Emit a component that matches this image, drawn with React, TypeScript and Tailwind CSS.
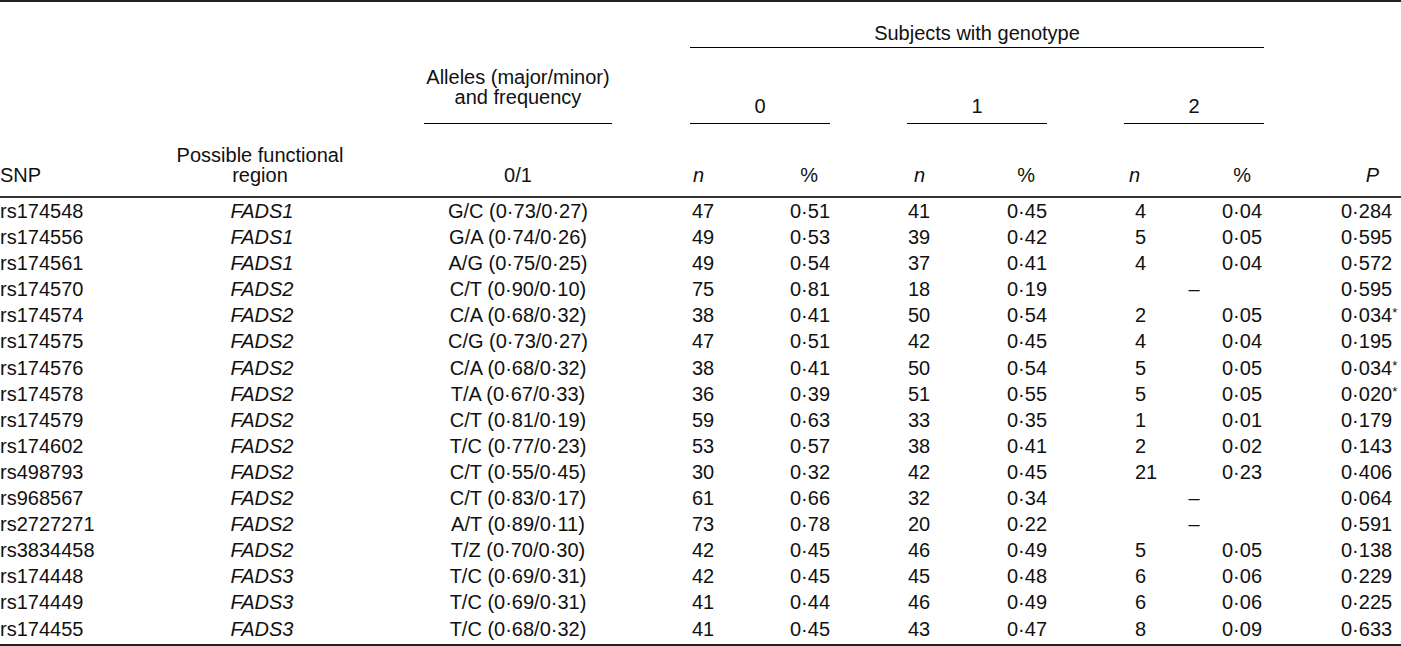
const COLS =
  "grid grid-cols-[170px_180px_74px_188px_78px_70px_70px_77px_70px_70px_77px_70px_70px_137px]";

type Row = {
  snp: string;
  region: string;
  alleles: string;
  n0: string;
  p0: string;
  n1: string;
  p1: string;
  n2?: string;
  p2?: string;
  p: string;
  sig?: boolean;
};

const ROWS: Row[] = [
  { snp: "rs174548", region: "FADS1", alleles: "G/C (0·73/0·27)", n0: "47", p0: "0·51", n1: "41", p1: "0·45", n2: "4", p2: "0·04", p: "0·284" },
  { snp: "rs174556", region: "FADS1", alleles: "G/A (0·74/0·26)", n0: "49", p0: "0·53", n1: "39", p1: "0·42", n2: "5", p2: "0·05", p: "0·595" },
  { snp: "rs174561", region: "FADS1", alleles: "A/G (0·75/0·25)", n0: "49", p0: "0·54", n1: "37", p1: "0·41", n2: "4", p2: "0·04", p: "0·572" },
  { snp: "rs174570", region: "FADS2", alleles: "C/T (0·90/0·10)", n0: "75", p0: "0·81", n1: "18", p1: "0·19", p: "0·595" },
  { snp: "rs174574", region: "FADS2", alleles: "C/A (0·68/0·32)", n0: "38", p0: "0·41", n1: "50", p1: "0·54", n2: "2", p2: "0·05", p: "0·034", sig: true },
  { snp: "rs174575", region: "FADS2", alleles: "C/G (0·73/0·27)", n0: "47", p0: "0·51", n1: "42", p1: "0·45", n2: "4", p2: "0·04", p: "0·195" },
  { snp: "rs174576", region: "FADS2", alleles: "C/A (0·68/0·32)", n0: "38", p0: "0·41", n1: "50", p1: "0·54", n2: "5", p2: "0·05", p: "0·034", sig: true },
  { snp: "rs174578", region: "FADS2", alleles: "T/A (0·67/0·33)", n0: "36", p0: "0·39", n1: "51", p1: "0·55", n2: "5", p2: "0·05", p: "0·020", sig: true },
  { snp: "rs174579", region: "FADS2", alleles: "C/T (0·81/0·19)", n0: "59", p0: "0·63", n1: "33", p1: "0·35", n2: "1", p2: "0·01", p: "0·179" },
  { snp: "rs174602", region: "FADS2", alleles: "T/C (0·77/0·23)", n0: "53", p0: "0·57", n1: "38", p1: "0·41", n2: "2", p2: "0·02", p: "0·143" },
  { snp: "rs498793", region: "FADS2", alleles: "C/T (0·55/0·45)", n0: "30", p0: "0·32", n1: "42", p1: "0·45", n2: "21", p2: "0·23", p: "0·406" },
  { snp: "rs968567", region: "FADS2", alleles: "C/T (0·83/0·17)", n0: "61", p0: "0·66", n1: "32", p1: "0·34", p: "0·064" },
  { snp: "rs2727271", region: "FADS2", alleles: "A/T (0·89/0·11)", n0: "73", p0: "0·78", n1: "20", p1: "0·22", p: "0·591" },
  { snp: "rs3834458", region: "FADS2", alleles: "T/Z (0·70/0·30)", n0: "42", p0: "0·45", n1: "46", p1: "0·49", n2: "5", p2: "0·05", p: "0·138" },
  { snp: "rs174448", region: "FADS3", alleles: "T/C (0·69/0·31)", n0: "42", p0: "0·45", n1: "45", p1: "0·48", n2: "6", p2: "0·06", p: "0·229" },
  { snp: "rs174449", region: "FADS3", alleles: "T/C (0·69/0·31)", n0: "41", p0: "0·44", n1: "46", p1: "0·49", n2: "6", p2: "0·06", p: "0·225" },
  { snp: "rs174455", region: "FADS3", alleles: "T/C (0·68/0·32)", n0: "41", p0: "0·45", n1: "43", p1: "0·47", n2: "8", p2: "0·09", p: "0·633" },
];

export default function App() {
  return (
    <div className="w-[1401px] bg-white font-['Liberation_Sans',Arial,sans-serif] text-[20px] text-[#111]">
      <div className="border-t-2 border-[#222]" />

      {/* header */}
      <div className={`${COLS} h-[46px] items-end leading-[20px]`}>
        <div className="col-start-6 col-span-8 border-b border-black pb-[4px] text-center">
          Subjects with genotype
        </div>
      </div>
      <div className={`${COLS} h-[76px] items-end leading-[20px]`}>
        <div className="col-start-4 border-b border-black pb-[16px] text-center">
          Alleles (major/minor)
          <br />
          and frequency
        </div>
        <div className="col-start-6 col-span-2 border-b border-black pb-[7px] text-center">0</div>
        <div className="col-start-9 col-span-2 border-b border-black pb-[7px] text-center">1</div>
        <div className="col-start-12 col-span-2 border-b border-black pb-[7px] text-center">2</div>
      </div>
      <div className={`${COLS} h-[72px] items-end pb-[11px] leading-[20px]`}>
        <div>SNP</div>
        <div className="text-center">
          Possible functional
          <br />
          region
        </div>
        <div className="col-start-4 text-center">0/1</div>
        <div className="col-start-6 pl-[3px] italic">n</div>
        <div className="pr-[12px] text-right">%</div>
        <div className="col-start-9 pl-[7px] italic">n</div>
        <div className="pr-[12px] text-right">%</div>
        <div className="col-start-12 pl-[5px] italic">n</div>
        <div className="pr-[13px] text-right">%</div>
        <div className="pr-[22px] text-right italic">P</div>
      </div>
      <div className="border-t-2 border-[#333]" />

      {/* body */}
      <div className="pb-[2px] leading-[26px]">
        {ROWS.map((r) => (
          <div key={r.snp} className={`${COLS} h-[26.1px]`}>
            <div>{r.snp}</div>
            <div className="pl-[4px] text-center italic">{r.region}</div>
            <div className="col-start-4 text-center">{r.alleles}</div>
            <div className="col-start-6 pl-[2px]">{r.n0}</div>
            <div className="text-right">{r.p0}</div>
            <div className="col-start-9 pl-[1px]">{r.n1}</div>
            <div className="text-right">{r.p1}</div>
            {r.n2 ? (
              <>
                <div className="col-start-12 pl-[11px]">{r.n2}</div>
                <div className="pr-[2px] text-right">{r.p2}</div>
              </>
            ) : (
              <div className="col-start-12 col-span-2 text-center">–</div>
            )}
            <div className="pl-[77px]">
              {r.p}
              {r.sig && <span className="relative -top-[5px] text-[13px]">*</span>}
            </div>
          </div>
        ))}
      </div>
      <div className="border-t-2 border-[#222]" />
    </div>
  );
}
